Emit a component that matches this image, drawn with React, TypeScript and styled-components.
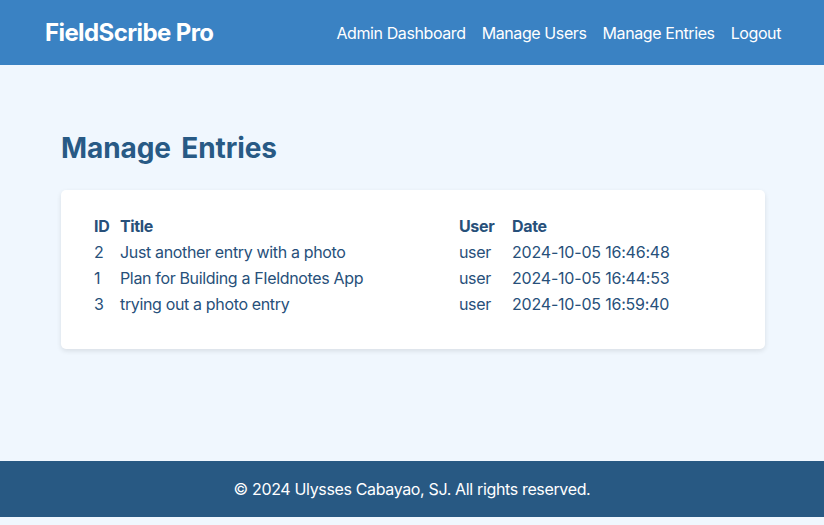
import React from "react";
import styled, { createGlobalStyle } from "styled-components";

const Global = createGlobalStyle`
  html, body { margin: 0; padding: 0; }
  body {
    font-family: Inter, "Noto Sans", sans-serif;
    background: #f0f7fe;
    color: #2a5279;
    letter-spacing: -0.35px;
  }
`;

const Page = styled.div`
  min-height: 100vh;
  display: flex;
  flex-direction: column;
  padding-bottom: 8px;
  box-sizing: border-box;
`;

const Header = styled.header`
  height: 65px;
  background: #3a82c3;
  display: flex;
  align-items: center;
  justify-content: space-between;
  padding: 0 43px 0 45px;
  color: #fff;
`;

const Brand = styled.div`
  font-size: 24px;
  font-weight: 700;
  letter-spacing: -0.6px;
`;

const Nav = styled.nav`
  display: flex;
  gap: 16px;
`;

const NavLink = styled.a`
  color: #fff;
  text-decoration: none;
  font-size: 16px;
  letter-spacing: -0.4px;
`;

const Main = styled.main`
  flex: 1;
  padding: 64px 59px 0 61px;
`;

const Heading = styled.h1`
  margin: 0 0 23px;
  font-size: 28px;
  font-weight: 700;
  color: #285a85;
  line-height: 38px;
  letter-spacing: -0.1px;
  word-spacing: 4px;
`;

const Card = styled.div`
  background: #fff;
  border-radius: 5px;
  box-shadow: 0 2px 5px rgba(0, 0, 0, 0.1);
  padding: 23px 33px 32px 33px;
`;

const Grid = styled.div`
  display: grid;
  grid-template-columns: 26px 339px 53px 1fr;
`;

const Cell = styled.div<{ $head?: boolean; $num?: boolean }>`
  font-size: 16px;
  line-height: 26px;
  font-weight: ${(p) => (p.$head ? 700 : 400)};
  letter-spacing: ${(p) => (p.$num ? "-0.2px" : "inherit")};
  color: #27507a;
  white-space: nowrap;
`;

const Footer = styled.footer`
  height: 56px;
  background: #285983;
  color: #fff;
  display: flex;
  align-items: center;
  justify-content: center;
  font-size: 16px;
`;

const entries = [
  { id: 2, title: "Just another entry with a photo", user: "user", date: "2024-10-05 16:46:48" },
  { id: 1, title: "Plan for Building a FIeldnotes App", user: "user", date: "2024-10-05 16:44:53" },
  { id: 3, title: "trying out a photo entry", user: "user", date: "2024-10-05 16:59:40" },
];

export default function App() {
  return (
    <>
      <Global />
      <Page>
        <Header>
          <Brand>FieldScribe Pro</Brand>
          <Nav>
            <NavLink href="#">Admin Dashboard</NavLink>
            <NavLink href="#">Manage Users</NavLink>
            <NavLink href="#">Manage Entries</NavLink>
            <NavLink href="#">Logout</NavLink>
          </Nav>
        </Header>
        <Main>
          <Heading>Manage Entries</Heading>
          <Card>
            <Grid>
              <Cell $head>ID</Cell>
              <Cell $head>Title</Cell>
              <Cell $head>User</Cell>
              <Cell $head>Date</Cell>
              {entries.map((e) => (
                <React.Fragment key={e.id}>
                  <Cell>{e.id}</Cell>
                  <Cell>{e.title}</Cell>
                  <Cell>{e.user}</Cell>
                  <Cell $num>{e.date}</Cell>
                </React.Fragment>
              ))}
            </Grid>
          </Card>
        </Main>
        <Footer>© 2024 Ulysses Cabayao, SJ. All rights reserved.</Footer>
      </Page>
    </>
  );
}
